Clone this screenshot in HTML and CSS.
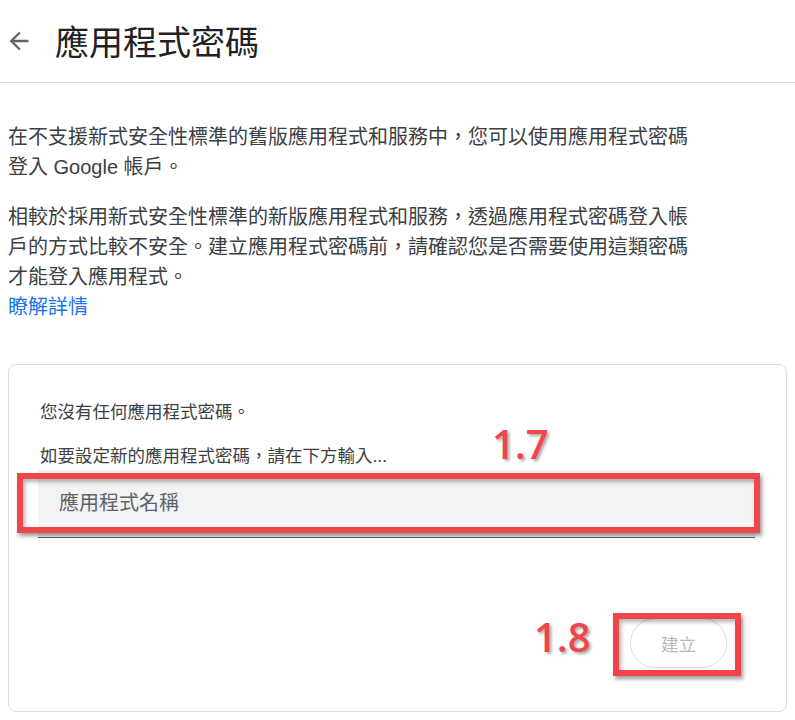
FILE: index.html
```html
<!DOCTYPE html>
<html lang="zh-Hant">
<head>
    <meta charset="UTF-8">
    <meta name="viewport" content="width=device-width, initial-scale=1.0">
    <title>應用程式密碼</title>
    <link rel="stylesheet" href="styles.css">
</head>
<body>
    <header class="topbar">
        <button class="back-btn" aria-label="返回">
            <svg viewBox="0 0 24 24" width="28" height="28"><path d="M20 11H7.83l5.59-5.59L12 4l-8 8 8 8 1.41-1.41L7.83 13H20v-2z"/></svg>
        </button>
        <h1 class="page-title">應用程式密碼</h1>
    </header>

    <main class="content">
        <p class="intro">在不支援新式安全性標準的舊版應用程式和服務中，您可以使用應用程式密碼<br>登入 Google 帳戶。</p>
        <p class="intro">相較於採用新式安全性標準的新版應用程式和服務，透過應用程式密碼登入帳<br>戶的方式比較不安全。建立應用程式密碼前，請確認您是否需要使用這類密碼<br>才能登入應用程式。<a class="learn-more" href="#">瞭解詳情</a></p>

        <section class="card">
            <p class="card-text">您沒有任何應用程式密碼。</p>
            <p class="card-text second">如要設定新的應用程式密碼，請在下方輸入...</p>
            <input class="app-name" type="text" placeholder="應用程式名稱">
            <div class="card-actions">
                <button class="create-btn" disabled>建立</button>
            </div>

            <!-- annotation marks drawn over the form -->
            <div class="mark mark-input"></div>
            <div class="mark mark-button"></div>
            <span class="step step-input">1.7</span>
            <span class="step step-button">1.8</span>
        </section>
    </main>
</body>
</html>
```

FILE: styles.css
```css
body {
    margin: 0;
    font-family: "Liberation Sans", "Noto Sans CJK TC", sans-serif;
    color: #3c4043;
    background: #fff;
}
.topbar {
    display: flex;
    align-items: center;
    height: 82px;
    padding-left: 5px;
    border-bottom: 1px solid #dadce0;
}
.back-btn {
    display: flex;
    padding: 0;
    border: none;
    background: none;
    cursor: pointer;
}
.back-btn svg {
    fill: #5f6368;
}
.page-title {
    margin: 0 0 0 22px;
    font-family: "Noto Sans CJK TC", sans-serif;
    font-size: 34px;
    font-weight: 400;
    color: #202124;
    line-height: 44px;
}
.content {
    padding: 0 8px 9px;
}
.intro {
    margin: 39px 0 0;
    font-size: 20px;
    line-height: 30px;
    white-space: nowrap;
}
.intro + .intro {
    margin-top: 20px;
}
.learn-more {
    display: block;
    color: #1a73e8;
    text-decoration: none;
}
.card {
    position: relative;
    margin-top: 42px;
    padding: 34px 31px 43px 29px;
    border: 1px solid #dadce0;
    border-radius: 8px;
}
.card-text {
    margin: 0;
    padding-left: 2px;
    font-size: 17.5px;
    line-height: 26px;
}
.card-text.second {
    margin-top: 18px;
}
.app-name {
    display: block;
    box-sizing: border-box;
    width: 100%;
    height: 68px;
    margin-top: 1px;
    padding: 0 0 0 21px;
    border: none;
    border-bottom: 1px solid #5f6368;
    background: #f1f3f4;
    font-family: inherit;
    font-size: 20px;
    color: #202124;
    outline: none;
}
.app-name::placeholder {
    color: #5f6368;
}
.card-actions {
    display: flex;
    justify-content: flex-end;
    margin-top: 80px;
    padding-right: 28px;
}
.create-btn {
    width: 97px;
    height: 50px;
    border: 1px solid #dadce0;
    border-radius: 25px;
    background: #fff;
    font-family: inherit;
    font-size: 17.5px;
    color: #b4b7bb;
}
.mark {
    position: absolute;
    box-sizing: border-box;
    border: 6px solid #f0454b;
    box-shadow: 2px 3px 4px rgba(0,0,0,0.4), inset 2px 3px 4px rgba(0,0,0,0.3);
}
.mark-input {
    left: 8px;
    top: 108px;
    width: 743px;
    height: 60px;
}
.mark-button {
    left: 604px;
    top: 248px;
    width: 128px;
    height: 63px;
}
.step {
    position: absolute;
    font-family: "Open Sans", sans-serif;
    font-size: 40px;
    font-weight: 600;
    line-height: 40px;
    color: #f0454b;
    text-shadow: 2px 2px 3px rgba(0,0,0,0.35);
}
.step-input {
    left: 483px;
    top: 59px;
}
.step-button {
    left: 525px;
    top: 252px;
}
```
